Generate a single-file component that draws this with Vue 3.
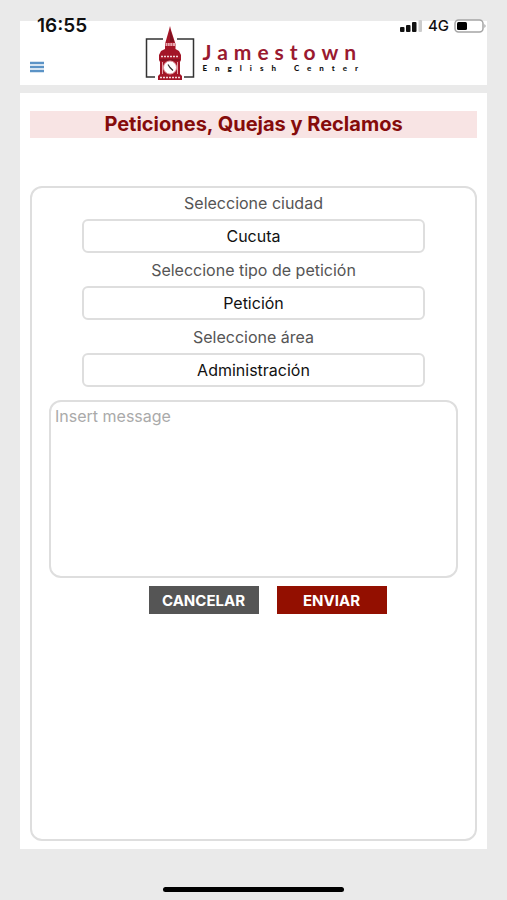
<script setup>
import { ref } from 'vue'

const city = ref('Cucuta')
const kind = ref('Petición')
const area = ref('Administración')
const message = ref('')

function reset() {
  message.value = ''
}
</script>

<template>
  <div class="screen">
    <header class="header">
      <span class="time">16:55</span>
      <a class="logo" href="#" aria-label="Jamestown English Center">
        <svg class="tower" viewBox="0 0 50 56" aria-hidden="true">
          <path d="M18 13H1.500V51H10M32 13H48.500V51H39" fill="none" stroke="#333" stroke-width="1.5" />
          <path d="M25 0L26 4L30.500 18V23L34 25L36 29V34L35 36V48L37 50V54H13V50L15 48V36L14 34V29L16 25L20 23V18L24 4Z" fill="#a31527" />
          <path d="M25 3L29 16H25Z" fill="#7d1220" />
          <path d="M20.500 18.500H30" stroke="#e9a9b0" stroke-width="3" />
          <path d="M22.500 17V20M25 17V20M27.500 17V20" stroke="#b84453" stroke-width=".7" />
          <path d="M16 30.500H34" stroke="#f3d7d9" stroke-width="1.500" stroke-dasharray="2 1" />
          <path d="M15 34H35" stroke="#6e101c" />
          <path d="M17.500 36V48M32.500 36V48" stroke="#e3a0a7" />
          <circle cx="25" cy="41.500" r="6.500" fill="#fff" stroke="#e3a0a7" />
          <path d="M23 38.500L25 41.500L28 44.500" fill="none" stroke="#333" stroke-width="1.200" />
          <path d="M15 51.500H35" stroke="#f3d7d9" stroke-width="1.500" stroke-dasharray="2 1" />
        </svg>
        <span class="wordmark">
          <span class="name">Jamestown</span>
          <span class="tagline">English Center</span>
        </span>
      </a>
      <div class="status">
        <svg class="signal" viewBox="0 0 23 12" aria-hidden="true">
          <rect x="0" y="7" width="4.500" height="5" rx="1" fill="#111" />
          <rect x="6" y="5" width="4.500" height="7" rx="1" fill="#111" />
          <rect x="12" y="2" width="4.500" height="10" rx="1" fill="#111" />
          <rect x="18.500" y="0" width="3.500" height="12" rx="1" fill="#ccc" />
        </svg>
        <span>4G</span>
        <svg class="battery" viewBox="0 0 33 14" aria-hidden="true">
          <rect x="1" y="1" width="28" height="12" rx="3.500" fill="#fff" stroke="#a5a5a5" stroke-width="1.500" />
          <rect x="3" y="3" width="10" height="8" rx="1.500" fill="#000" />
          <path d="M30.500 5Q32.500 7 30.500 9Z" fill="#888" />
        </svg>
      </div>
      <button class="menu" type="button" aria-label="Menú">
        <svg viewBox="0 0 14 12" aria-hidden="true">
          <path d="M0 2H14M0 6H14M0 10H14" stroke="#5b93c6" stroke-width="2.400" />
        </svg>
      </button>
    </header>

    <main class="main">
      <h1 class="title">Peticiones, Quejas y Reclamos</h1>
      <form class="card" @submit.prevent>
        <div class="field">
          <label for="city">Seleccione ciudad</label>
          <select id="city" v-model="city"><option>Cucuta</option></select>
        </div>
        <div class="field">
          <label for="kind">Seleccione tipo de petición</label>
          <select id="kind" v-model="kind"><option>Petición</option></select>
        </div>
        <div class="field">
          <label for="area">Seleccione área</label>
          <select id="area" v-model="area"><option>Administración</option></select>
        </div>
        <textarea v-model="message" class="message" placeholder="Insert message" aria-label="Insert message"></textarea>
        <div class="actions">
          <button class="cancel" type="button" @click="reset">CANCELAR</button>
          <button class="send" type="submit">ENVIAR</button>
        </div>
      </form>
    </main>
    <div class="home"></div>
  </div>
</template>

<style>
body {
  background: #eaeaea;
}
</style>

<style scoped>
.screen,
.screen * {
  box-sizing: border-box;
}
.screen {
  min-height: 100vh;
  display: flex;
  flex-direction: column;
  padding: 21px 20px 8px;
  font-family: Inter, "Liberation Sans", sans-serif;
  font-size: 16px;
  color: #111;
}
.header {
  display: grid;
  grid-template-columns: 1fr auto 1fr;
  grid-template-rows: 10px 1fr;
  height: 64px;
  background: #fff;
}
.time {
  align-self: center;
  padding-left: 17px;
  font-size: 19px;
  line-height: 20px;
  font-weight: 600;
}
.logo {
  grid-column: 2;
  grid-row: 1 / 3;
  display: flex;
  gap: 8px;
  width: 218px;
  padding-top: 5px;
  text-decoration: none;
}
.tower {
  width: 50px;
  height: 56px;
  flex: none;
}
.wordmark {
  display: flex;
  flex-direction: column;
  gap: 2px;
  padding-top: 15px;
  font-family: Lato, sans-serif;
  white-space: nowrap;
}
.name {
  font-size: 21px;
  line-height: 21px;
  font-weight: 700;
  letter-spacing: 6px;
  color: #9a1a30;
}
.tagline {
  font-size: 8px;
  line-height: 8px;
  font-weight: 900;
  letter-spacing: 8px;
  color: #111;
}
.status {
  grid-column: 3;
  grid-row: 1;
  display: flex;
  align-items: center;
  justify-content: flex-end;
  gap: 5px;
  font-size: 15px;
  line-height: 20px;
  font-weight: 500;
}
.signal {
  width: 23px;
  height: 12px;
  flex: none;
}
.battery {
  width: 33px;
  height: 14px;
  flex: none;
}
button {
  border: 0;
  padding: 0;
  font: inherit;
  cursor: pointer;
}
.menu {
  grid-column: 1;
  grid-row: 2;
  align-self: center;
  display: flex;
  margin-top: 18px;
  margin-left: 10px;
  width: 14px;
  background: none;
}
.menu svg {
  width: 14px;
  height: 12px;
}
.main {
  flex: 1;
  display: flex;
  flex-direction: column;
  margin-top: 8px;
  padding: 18px 10px 8px;
  background: #fff;
}
.title {
  margin: 0 0 48px;
  background: #f8e4e4;
  color: #850b0b;
  font-size: 20px;
  line-height: 27px;
  font-weight: 700;
  text-align: center;
}
.card {
  flex: 1;
  display: flex;
  flex-direction: column;
  gap: 2px;
  padding: 0 17px;
  border: 2px solid #dedede;
  border-radius: 12px;
}
.field {
  display: flex;
  flex-direction: column;
  padding: 0 33px;
}
.field label {
  line-height: 31px;
  text-align: center;
  color: #555;
}
select {
  appearance: none;
  height: 34px;
  padding: 0;
  border: 2px solid #dedede;
  border-radius: 6px;
  background: #fff;
  color: #111;
  font: inherit;
  text-align: center;
  text-align-last: center;
}
.message {
  height: 178px;
  margin-top: 11px;
  padding: 4px;
  border: 2px solid #dedede;
  border-radius: 12px;
  background: #fff;
  font: inherit;
  line-height: 20px;
  resize: none;
}
.message::placeholder {
  color: #aaa;
}
.actions {
  display: flex;
  justify-content: center;
  gap: 18px;
  margin-top: 6px;
  padding-left: 28px;
}
.actions button {
  width: 110px;
  height: 28px;
  color: #fff;
  font-size: 15px;
  font-weight: 700;
}
.actions .cancel {
  background: #555;
}
.actions .send {
  background: #930f00;
}
.home {
  align-self: center;
  width: 181px;
  height: 5px;
  margin-top: 38px;
  border-radius: 3px;
  background: #000;
}
</style>
